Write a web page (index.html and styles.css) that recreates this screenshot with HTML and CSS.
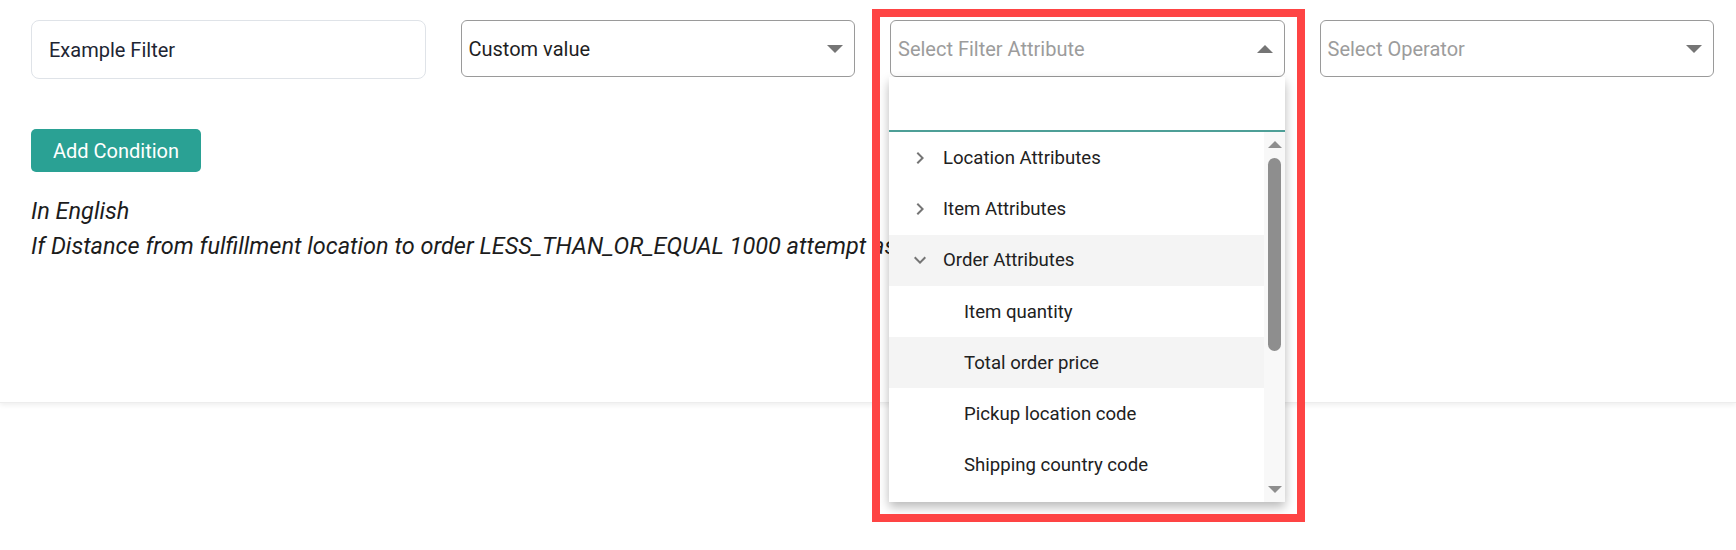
FILE: index.html
```html
<!DOCTYPE html>
<html lang="en">
<head>
    <meta charset="UTF-8">
    <meta name="viewport" content="width=device-width, initial-scale=1.0">
    <title>Filter Conditions</title>
    <link rel="stylesheet" href="styles.css">
</head>
<body>
    <div class="card">
        <div class="filter-row">
            <div class="field">
                <div class="text-input">Example Filter</div>
            </div>
            <div class="field">
                <div class="select">
                    <span class="select-value">Custom value</span>
                    <svg class="caret" width="16" height="8" viewBox="0 0 16 8"><path d="M0 0h16L8 8z"/></svg>
                </div>
            </div>
            <div class="field attr-field">
                <div class="select">
                    <span class="select-value placeholder">Select Filter Attribute</span>
                    <svg class="caret" width="16" height="8" viewBox="0 0 16 8"><path d="M0 8h16L8 0z"/></svg>
                </div>
                <div class="dropdown">
                    <div class="dropdown-search"></div>
                    <div class="dropdown-body">
                        <div class="options">
                            <div class="option group">
                                <svg class="chev" width="24" height="24" viewBox="0 0 24 24"><path d="M10 6L8.59 7.41 13.17 12l-4.58 4.59L10 18l6-6z"/></svg>
                                Location Attributes
                            </div>
                            <div class="option group">
                                <svg class="chev" width="24" height="24" viewBox="0 0 24 24"><path d="M10 6L8.59 7.41 13.17 12l-4.58 4.59L10 18l6-6z"/></svg>
                                Item Attributes
                            </div>
                            <div class="option group hover">
                                <svg class="chev" width="24" height="24" viewBox="0 0 24 24"><path d="M16.59 8.59L12 13.17 7.41 8.59 6 10l6 6 6-6z"/></svg>
                                Order Attributes
                            </div>
                            <div class="option child">Item quantity</div>
                            <div class="option child hover">Total order price</div>
                            <div class="option child">Pickup location code</div>
                            <div class="option child">Shipping country code</div>
                        </div>
                        <div class="scrollbar">
                            <svg class="scroll-arrow" width="14" height="7" viewBox="0 0 14 7"><path d="M0 7h14L7 0z"/></svg>
                            <div class="scroll-track"><div class="scroll-thumb"></div></div>
                            <svg class="scroll-arrow" width="14" height="7" viewBox="0 0 14 7"><path d="M0 0h14L7 7z"/></svg>
                        </div>
                    </div>
                </div>
                <div class="highlight"></div>
            </div>
            <div class="field">
                <div class="select">
                    <span class="select-value placeholder">Select Operator</span>
                    <svg class="caret" width="16" height="8" viewBox="0 0 16 8"><path d="M0 0h16L8 8z"/></svg>
                </div>
            </div>
        </div>
        <button class="add-btn">Add Condition</button>
        <div class="summary">
            <div>In English</div>
            <div>If Distance from fulfillment location to order LESS_THAN_OR_EQUAL 1000 attempt as</div>
        </div>
    </div>
</body>
</html>
```

FILE: styles.css
```css
html, body {
    margin: 0;
    min-height: 550px;
}
body {
    font-family: Roboto, "Noto Sans", Arial, sans-serif;
    background-color: #fff;
    color: #212121;
}
.card {
    box-sizing: border-box;
    height: 403px;
    padding: 20px 22px 0 31px;
    background: #fff;
    box-shadow: 0 2px 5px rgba(0, 0, 0, 0.07);
    border-bottom: 1px solid #ededed;
}
.filter-row {
    display: grid;
    grid-template-columns: repeat(4, 1fr);
    column-gap: 35px;
    align-items: start;
}
.field {
    position: relative;
}
.text-input {
    box-sizing: border-box;
    height: 59px;
    display: flex;
    align-items: center;
    padding-left: 17px;
    border: 1px solid #dfe3e8;
    border-radius: 8px;
    font-size: 20px;
    color: #1e2533;
}
.select {
    box-sizing: border-box;
    height: 57px;
    display: flex;
    align-items: center;
    justify-content: space-between;
    padding: 0 11px 0 7px;
    border: 1px solid #9a9a9a;
    border-radius: 6px;
    font-size: 20px;
}
.select-value {
    color: #1f1f1f;
}
.select-value.placeholder {
    color: #9c9c9c;
}
.caret {
    fill: #757575;
}
.dropdown {
    position: absolute;
    top: 57px;
    left: -1px;
    width: 396px;
    height: 425px;
    background: #fff;
    box-shadow: 0 5px 10px rgba(0, 0, 0, 0.28);
    z-index: 5;
    display: flex;
    flex-direction: column;
}
.dropdown-search {
    height: 53px;
    border-bottom: 2px solid #4e9f97;
}
.dropdown-body {
    flex: 1;
    display: flex;
    overflow: hidden;
}
.options {
    flex: 1;
    overflow: hidden;
}
.option {
    height: 51.3px;
    display: flex;
    align-items: center;
    font-size: 18.6px;
    color: #212121;
}
.option.group {
    padding-left: 19px;
    gap: 11px;
}
.option.child {
    padding-left: 75px;
}
.option.hover {
    background: #f4f4f4;
}
.chev {
    fill: #757575;
    flex-shrink: 0;
}
.scrollbar {
    width: 21px;
    background: #f8f8f8;
    display: flex;
    flex-direction: column;
    align-items: center;
    padding: 9px 0 9px 0;
    box-sizing: border-box;
}
.scroll-arrow {
    fill: #8e8e8e;
    flex-shrink: 0;
}
.scroll-track {
    flex: 1;
    width: 100%;
    padding: 10px 0 0 4px;
    box-sizing: border-box;
}
.scroll-thumb {
    width: 13px;
    height: 193px;
    border-radius: 7px;
    background: #8e8e8e;
}
.highlight {
    position: absolute;
    top: -11px;
    left: -18px;
    width: 433px;
    height: 513px;
    box-sizing: border-box;
    border: 8.5px solid #fe4444;
    z-index: 10;
    pointer-events: none;
}
.add-btn {
    margin-top: 50px;
    width: 170px;
    height: 43px;
    border: none;
    border-radius: 5px;
    background: #2aa194;
    color: #fff;
    font-family: inherit;
    font-size: 20px;
}
.summary {
    margin-top: 22px;
    font-style: italic;
    font-size: 23.5px;
    line-height: 35px;
    color: #1c1c1c;
    white-space: nowrap;
}
```
